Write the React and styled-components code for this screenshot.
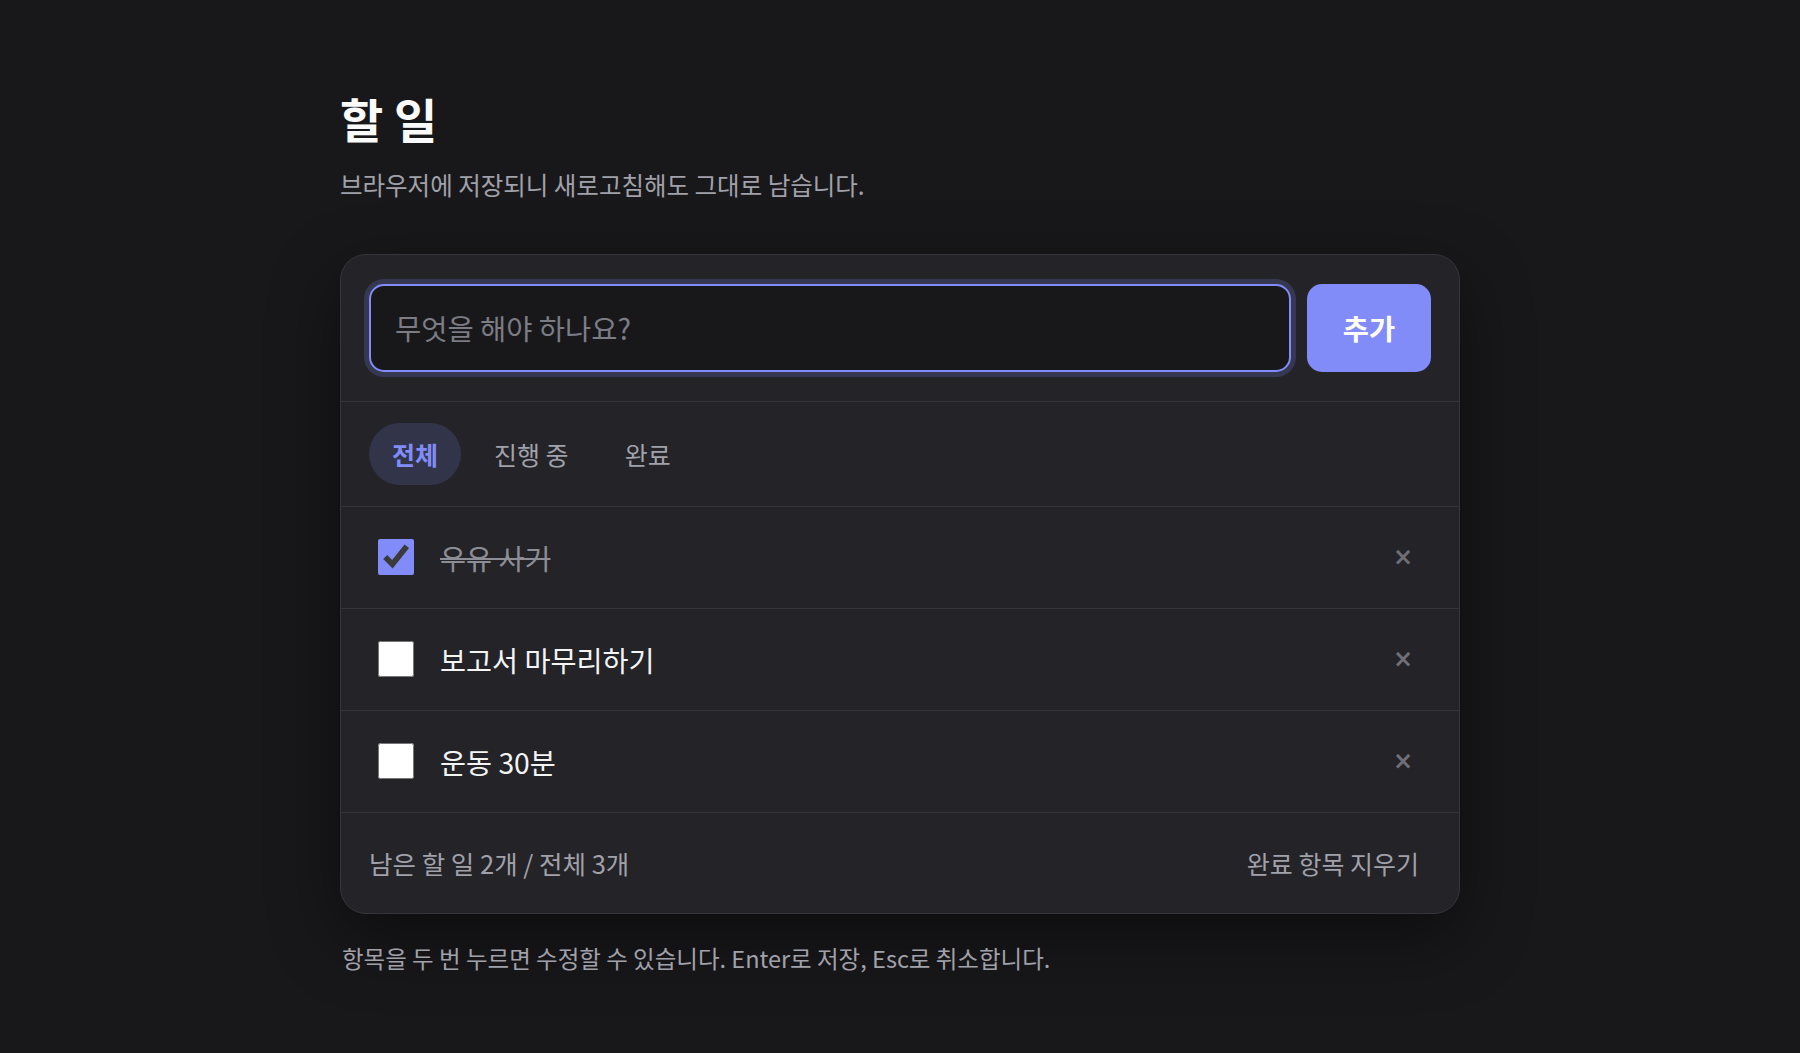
import React, { useState } from 'react'
import styled, { createGlobalStyle } from 'styled-components'

const GlobalStyle = createGlobalStyle`
  html, body {
    margin: 0;
    padding: 0;
    background: #18181b;
  }
  body {
    font-family: "Noto Sans CJK KR", "Noto Sans", sans-serif;
    color: #f4f4f5;
  }
  * { box-sizing: border-box; }
`

// Layout //
const Page = styled.main`
  width: 1120px;
  margin: 0 auto;
  padding: 90px 0 60px;
`

const Title = styled.h1`
  margin: 0;
  font-size: 47px;
  font-weight: 700;
  line-height: 1.2;
  color: #fafafa;
`

const Subtitle = styled.p`
  margin: 22px 0 0;
  font-size: 24.5px;
  line-height: 1.4;
  color: #a1a1aa;
`

const Card = styled.section`
  margin-top: 51px;
  background: #232328;
  border: 1px solid #35353b;
  border-radius: 26px;
  box-shadow: 0 24px 70px rgba(0, 0, 0, 0.45);
  overflow: hidden;
`

const AddForm = styled.form`
  display: flex;
  gap: 16px;
  padding: 29px 28px 29px;
  border-bottom: 1px solid #34343a;
`

const TaskInput = styled.input`
  flex: 1;
  height: 88px;
  padding: 0 24px;
  background: #18181b;
  border: 2px solid #818cf8;
  border-radius: 15px;
  box-shadow: 0 0 0 5px rgba(129, 140, 248, 0.2);
  font-family: inherit;
  font-size: 28.5px;
  color: #f4f4f5;
  outline: none;
  &::placeholder { color: #7c7c85; }
`

const AddButton = styled.button`
  width: 124px;
  height: 88px;
  border: 0;
  border-radius: 15px;
  background: #818cf8;
  color: #ffffff;
  font-family: inherit;
  font-size: 28.5px;
  font-weight: 700;
  cursor: pointer;
`

const FilterBar = styled.nav`
  display: flex;
  gap: 10px;
  padding: 21px 28px;
  border-bottom: 1px solid #34343a;
`

const FilterTab = styled.button`
  height: 62px;
  padding: 0 23px;
  border: 0;
  border-radius: 31px;
  background: ${p => (p.$active ? 'rgba(129, 140, 248, 0.16)' : 'transparent')};
  color: ${p => (p.$active ? '#818cf8' : '#a1a1aa')};
  font-family: inherit;
  font-size: 25px;
  font-weight: ${p => (p.$active ? 700 : 400)};
  cursor: pointer;
`

const List = styled.ul`
  margin: 0;
  padding: 0;
  list-style: none;
`

const Row = styled.li`
  display: flex;
  align-items: center;
  gap: 26px;
  height: 102px;
  padding: 0 34px 0 37px;
  border-bottom: 1px solid #34343a;
`

const Check = styled.input`
  width: 36px;
  height: 36px;
  margin: 0;
  accent-color: #818cf8;
  cursor: pointer;
`

const Label = styled.span`
  flex: 1;
  font-size: 28.3px;
  color: ${p => (p.$done ? '#8d8d95' : '#f4f4f5')};
  text-decoration: ${p => (p.$done ? 'line-through' : 'none')};
  text-decoration-thickness: 2px;
`

const DeleteButton = styled.button`
  width: 44px;
  height: 44px;
  padding: 0;
  border: 0;
  background: transparent;
  color: #6f6f77;
  font-family: "DejaVu Sans", sans-serif;
  font-size: 24px;
  font-weight: 700;
  cursor: pointer;
`

const Footer = styled.footer`
  display: flex;
  align-items: center;
  justify-content: space-between;
  height: 100px;
  padding: 0 24px 0 28px;
  font-size: 25.5px;
  color: #a1a1aa;
`

const ClearButton = styled.button`
  padding: 8px 16px;
  border: 0;
  background: transparent;
  color: #a1a1aa;
  font-family: inherit;
  font-size: 25px;
  cursor: pointer;
`

const Hint = styled.p`
  margin: 28px 0 0 2px;
  font-size: 23.5px;
  line-height: 1.4;
  color: #a1a1aa;
`

const FILTERS = [
  { key: 'all', label: '전체' },
  { key: 'active', label: '진행 중' },
  { key: 'done', label: '완료' },
]

export default function App() {
  const [todos, setTodos] = useState([
    { id: 1, text: '우유 사기', done: true },
    { id: 2, text: '보고서 마무리하기', done: false },
    { id: 3, text: '운동 30분', done: false },
  ])
  const [filter, setFilter] = useState('all')
  const [draft, setDraft] = useState('')

  const shown = todos.filter(t =>
    filter === 'all' ? true : filter === 'done' ? t.done : !t.done
  )
  const left = todos.filter(t => !t.done).length

  const add = e => {
    e.preventDefault()
    if (!draft.trim()) return
    setTodos([...todos, { id: Date.now(), text: draft.trim(), done: false }])
    setDraft('')
  }

  return (
    <Page>
      <GlobalStyle />
      <Title>할 일</Title>
      <Subtitle>브라우저에 저장되니 새로고침해도 그대로 남습니다.</Subtitle>
      <Card>
        <AddForm onSubmit={add}>
          <TaskInput
            placeholder="무엇을 해야 하나요?"
            value={draft}
            onChange={e => setDraft(e.target.value)}
          />
          <AddButton type="submit">추가</AddButton>
        </AddForm>
        <FilterBar>
          {FILTERS.map(f => (
            <FilterTab key={f.key} $active={filter === f.key} onClick={() => setFilter(f.key)}>
              {f.label}
            </FilterTab>
          ))}
        </FilterBar>
        <List>
          {shown.map(t => (
            <Row key={t.id}>
              <Check
                type="checkbox"
                checked={t.done}
                onChange={() => setTodos(todos.map(x => (x.id === t.id ? { ...x, done: !x.done } : x)))}
              />
              <Label $done={t.done}>{t.text}</Label>
              <DeleteButton onClick={() => setTodos(todos.filter(x => x.id !== t.id))}>×</DeleteButton>
            </Row>
          ))}
        </List>
        <Footer>
          <span>남은 할 일 {left}개 / 전체 {todos.length}개</span>
          <ClearButton onClick={() => setTodos(todos.filter(t => !t.done))}>완료 항목 지우기</ClearButton>
        </Footer>
      </Card>
      <Hint>항목을 두 번 누르면 수정할 수 있습니다. Enter로 저장, Esc로 취소합니다.</Hint>
    </Page>
  )
}
